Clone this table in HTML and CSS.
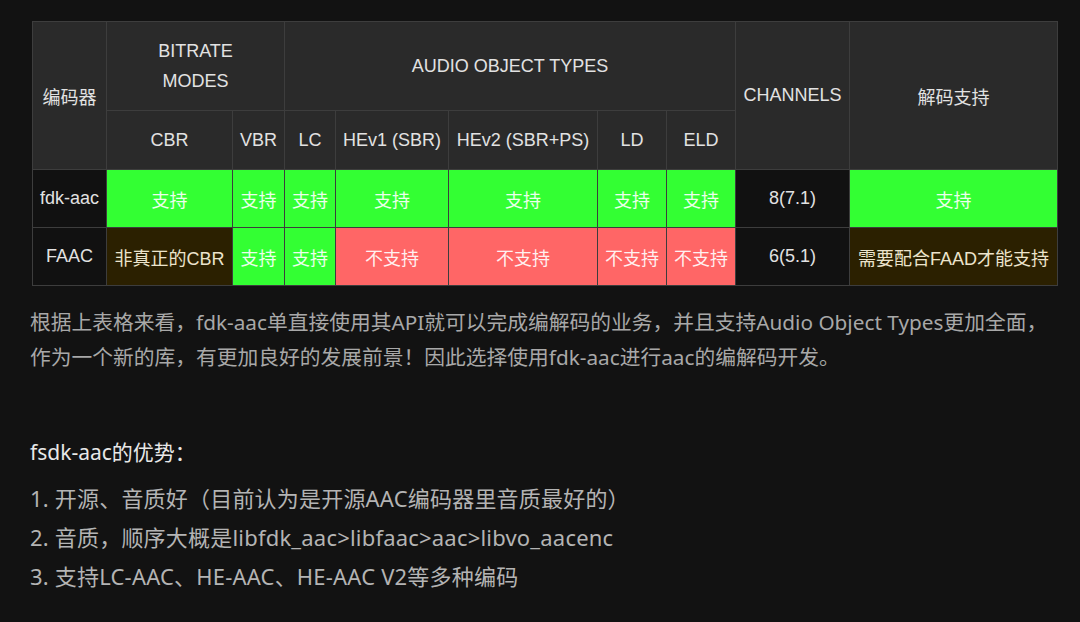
FILE: index.html
```html
<!DOCTYPE html>
<html lang="zh-CN">
<head>
<meta charset="utf-8">
<title>fdk-aac vs FAAC</title>
<link rel="stylesheet" href="styles.css">
</head>
<body>
<div class="page">
  <table class="cmp">
    <colgroup>
      <col class="c74"><col class="c126"><col class="c52"><col class="c51"><col class="c113">
      <col class="c149"><col class="c69"><col class="c69"><col class="c114"><col class="c208">
    </colgroup>
    <tr class="h1">
      <th rowspan="2">编码器</th>
      <th colspan="2" class="two">BITRATE<br>MODES</th>
      <th colspan="5">AUDIO OBJECT TYPES</th>
      <th rowspan="2">CHANNELS</th>
      <th rowspan="2">解码支持</th>
    </tr>
    <tr class="h2">
      <th>CBR</th><th>VBR</th><th>LC</th><th>HEv1 (SBR)</th><th>HEv2 (SBR+PS)</th><th>LD</th><th>ELD</th>
    </tr>
    <tr class="r">
      <td class="name">fdk-aac</td>
      <td class="ok">支持</td><td class="ok">支持</td><td class="ok">支持</td><td class="ok">支持</td>
      <td class="ok">支持</td><td class="ok">支持</td><td class="ok">支持</td>
      <td class="name">8(7.1)</td><td class="ok">支持</td>
    </tr>
    <tr class="r">
      <td class="name">FAAC</td>
      <td class="warn">非真正的CBR</td><td class="ok">支持</td><td class="ok">支持</td><td class="no">不支持</td>
      <td class="no">不支持</td><td class="no">不支持</td><td class="no">不支持</td>
      <td class="name">6(5.1)</td><td class="warn">需要配合FAAD才能支持</td>
    </tr>
  </table>

  <p class="para">根据上表格来看，fdk-aac单直接使用其API就可以完成编解码的业务，并且支持Audio Object Types更加全面，<br>作为一个新的库，有更加良好的发展前景！因此选择使用fdk-aac进行aac的编解码开发。</p>

  <p class="heading">fsdk-aac的优势：</p>
  <ol class="list">
    <li>1. 开源、音质好（目前认为是开源AAC编码器里音质最好的）</li>
    <li>2. 音质，顺序大概是libfdk_aac&gt;libfaac&gt;aac&gt;libvo_aacenc</li>
    <li>3. 支持LC-AAC、HE-AAC、HE-AAC V2等多种编码</li>
  </ol>
</div>
</body>
</html>
```

FILE: styles.css
```css
html, body {
  margin: 0;
  padding: 0;
  background: #121212;
}
.page {
  padding: 21px 0 0 30px;
  width: 1040px;
}
.cmp {
  margin-left: 2px;
  width: 1025px;
  table-layout: fixed;
  border-collapse: collapse;
  font-family: "Liberation Sans", "Noto Sans CJK SC", Arial, sans-serif;
  font-size: 18px;
  color: #e2e2e2;
}
.c74 { width: 74px; }
.c126 { width: 126px; }
.c52 { width: 52px; }
.c51 { width: 51px; }
.c113 { width: 113px; }
.c149 { width: 149px; }
.c69 { width: 69px; }
.c114 { width: 114px; }
.c208 { width: 208px; }
.cmp th, .cmp td {
  border: 1px solid #3d3d3d;
  padding: 0;
  text-align: center;
  vertical-align: middle;
  font-weight: normal;
  white-space: nowrap;
}
.cmp th {
  background: #2a2a2a;
}
.h1 { height: 89px; }
.h2 { height: 59px; }
.r { height: 58px; }
.two { line-height: 30px; }
.name { background: #111111; }
.ok { background: #33ff33; color: #ecffec; }
.no { background: #ff6666; color: #fff0f0; }
.warn { background: #2b2000; color: #ece4cc; }
.para {
  margin: 19px 0 0;
  font-family: "Noto Sans", "Noto Sans CJK SC", sans-serif;
  font-size: 20.75px;
  line-height: 35px;
  color: #a8a8a8;
  white-space: nowrap;
}
.heading {
  margin: 60px 0 0;
  font-family: "Noto Sans", "Noto Sans CJK SC", sans-serif;
  font-size: 21px;
  line-height: 35px;
  color: #e8e8e8;
}
.list {
  list-style: none;
  margin: 9px 0 0;
  padding: 0;
  font-family: "Noto Sans", "Noto Sans CJK SC", sans-serif;
  font-size: 22px;
  letter-spacing: 0.2px;
  line-height: 39px;
  color: #b4b4b4;
}
```
